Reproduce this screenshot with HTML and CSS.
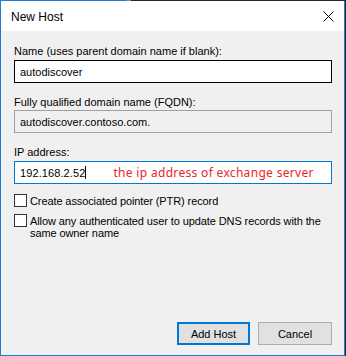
FILE: index.html
```html
<!DOCTYPE html>
<html lang="en">
<head>
  <meta charset="UTF-8">
  <title>New Host</title>
  <link rel="stylesheet" href="styles.css">
</head>
<body>
  <div class="window">
    <div class="titlebar">
      <span class="title">New Host</span>
      <span class="close">
        <svg width="11" height="11" viewBox="0 0 11 11">
          <path d="M0.5 0.5 L10.5 10.5 M10.5 0.5 L0.5 10.5" stroke="#000" stroke-width="1" fill="none"/>
        </svg>
      </span>
    </div>

    <form class="client">
      <label class="field-label first">Name (uses parent domain name if blank):</label>
      <div class="textbox name-box">autodiscover</div>

      <label class="field-label">Fully qualified domain name (FQDN):</label>
      <div class="textbox readonly">autodiscover.contoso.com.</div>

      <label class="field-label">IP address:</label>
      <div class="textbox ip-box">
        <span class="ip">192.168.2.52</span><span class="caret"></span>
        <span class="note">the ip address of exchange server</span>
      </div>

      <div class="check-row first-check">
        <span class="checkbox"></span>
        <span class="check-text">Create associated pointer (PTR) record</span>
      </div>
      <div class="check-row">
        <span class="checkbox"></span>
        <span class="check-text">Allow any authenticated user to update DNS records with the same owner name</span>
      </div>

      <div class="buttons">
        <button type="button" class="btn default">Add Host</button>
        <button type="button" class="btn">Cancel</button>
      </div>
    </form>
  </div>
</body>
</html>
```

FILE: styles.css
```css
body {
  margin: 0;
  padding: 0;
  background: #2a2a2a;
  font-family: 'Liberation Sans', Arial, sans-serif;
  font-size: 11px;
  color: #000;
}

.window {
  position: relative;
  width: 343px;
  height: 354px;
  border: 1px solid #1f7bd4;
  border-top: none;
  padding-top: 1px;
  box-sizing: content-box;
  display: flex;
  flex-direction: column;
}

/* top edge: partly covered by another window in the shot */
.window::before {
  content: "";
  position: absolute;
  top: 0;
  left: -1px;
  right: -1px;
  height: 1px;
  background: linear-gradient(to right, #1f7bd4 0, #1f7bd4 126px, #8a8a8a 126px, #8a8a8a 131px, #2a2a2a 131px);
}

.titlebar {
  height: 30px;
  background: #fff;
  display: flex;
  align-items: center;
  justify-content: space-between;
  padding: 0 10px 0 10px;
}

.title {
  font-size: 12px;
  margin-top: 1px;
}

.close {
  display: flex;
  margin-top: 1px;
}

.client {
  flex: 1;
  background: #f0f0f0;
  margin: 0;
  padding: 0 12px 0 13px;
  display: flex;
  flex-direction: column;
}

.field-label {
  display: block;
  line-height: 13px;
  margin-top: 13px;
  margin-bottom: 1px;
}

.field-label.first {
  margin-top: 14px;
  margin-bottom: 2px;
}

.textbox {
  height: 21px;
  border: 1px solid #7a7a7a;
  background: #fff;
  display: flex;
  align-items: center;
  padding-left: 5px;
  white-space: nowrap;
}

.name-box {
  border-color: #000;
}

.readonly {
  background: #f0f0f0;
  border-color: #a0a0a0;
}

.ip-box {
  border-color: #0078d7;
  margin-top: 1px;
}

.ip {
  letter-spacing: 0.1px;
}

.caret {
  display: inline-block;
  width: 1px;
  height: 13px;
  background: #000;
}

.note {
  font-family: 'Noto Sans', sans-serif;
  font-size: 12px;
  color: #e8262a;
  margin-left: 27px;
  letter-spacing: 0.32px;
}

.check-row {
  display: flex;
  align-items: flex-start;
  margin-top: 7px;
}

.check-row.first-check {
  margin-top: 10px;
}

.checkbox {
  flex: none;
  width: 11px;
  height: 11px;
  border: 1px solid #333;
  background: #fff;
  margin-right: 3px;
}

.check-text {
  line-height: 12px;
  margin-top: 1px;
  letter-spacing: -0.1px;
}

.buttons {
  margin-top: auto;
  margin-bottom: 10px;
  display: flex;
  justify-content: flex-end;
  gap: 8px;
}

.btn {
  width: 74px;
  height: 23px;
  font-family: 'Liberation Sans', Arial, sans-serif;
  font-size: 11px;
  background: #e1e1e1;
  border: 1px solid #adadad;
  padding: 0;
  color: #000;
}

.btn.default {
  width: 73px;
  border: 2px solid #0078d7;
}
```
